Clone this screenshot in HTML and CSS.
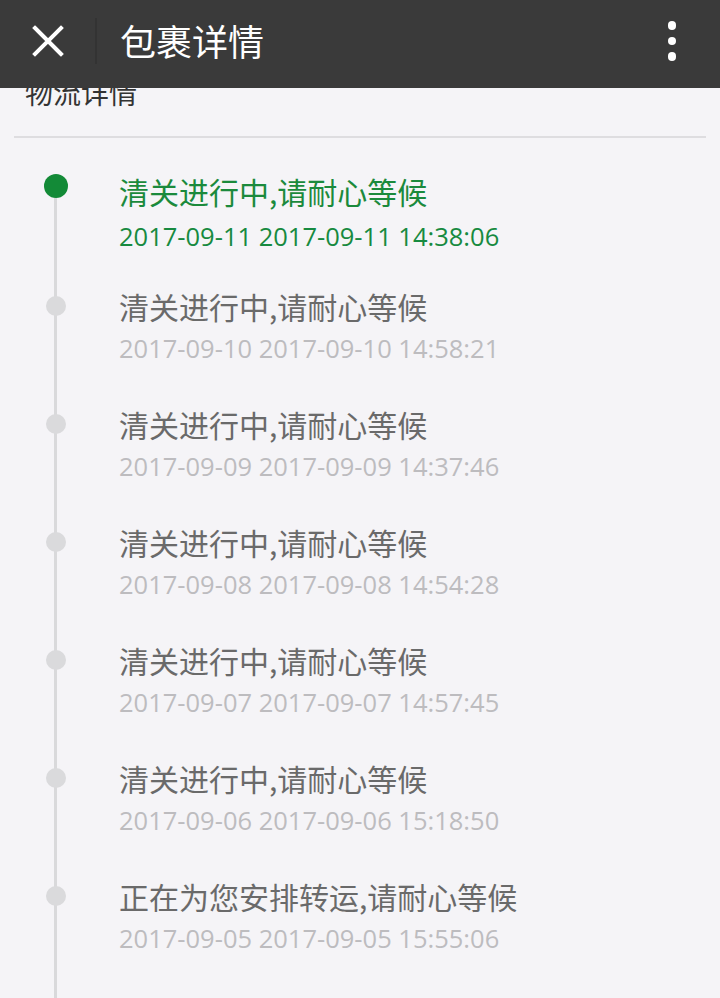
FILE: index.html
```html
<!DOCTYPE html>
<html lang="zh-CN">
<head>
<meta charset="utf-8">
<title>包裹详情</title>
<link rel="stylesheet" href="styles.css">
</head>
<body>
<header class="appbar">
  <button class="appbar-close" aria-label="关闭">
    <svg viewBox="0 0 32 32" width="32" height="32"><path d="M3 3 L29 29 M29 3 L3 29" stroke="#fff" stroke-width="4" stroke-linecap="square" fill="none"/></svg>
  </button>
  <span class="appbar-sep"></span>
  <h1 class="appbar-title">包裹详情</h1>
  <button class="appbar-more" aria-label="更多">
    <span></span><span></span><span></span>
  </button>
</header>

<main class="page">
  <h2 class="section-title">物流详情</h2>
  <ol class="timeline">
    <li class="event is-current">
      <span class="event-dot"></span>
      <div class="event-body">
        <p class="event-text">清关进行中,请耐心等候</p>
        <p class="event-time">2017-09-11 2017-09-11 14:38:06</p>
      </div>
    </li>
    <li class="event">
      <span class="event-dot"></span>
      <div class="event-body">
        <p class="event-text">清关进行中,请耐心等候</p>
        <p class="event-time">2017-09-10 2017-09-10 14:58:21</p>
      </div>
    </li>
    <li class="event">
      <span class="event-dot"></span>
      <div class="event-body">
        <p class="event-text">清关进行中,请耐心等候</p>
        <p class="event-time">2017-09-09 2017-09-09 14:37:46</p>
      </div>
    </li>
    <li class="event">
      <span class="event-dot"></span>
      <div class="event-body">
        <p class="event-text">清关进行中,请耐心等候</p>
        <p class="event-time">2017-09-08 2017-09-08 14:54:28</p>
      </div>
    </li>
    <li class="event">
      <span class="event-dot"></span>
      <div class="event-body">
        <p class="event-text">清关进行中,请耐心等候</p>
        <p class="event-time">2017-09-07 2017-09-07 14:57:45</p>
      </div>
    </li>
    <li class="event">
      <span class="event-dot"></span>
      <div class="event-body">
        <p class="event-text">清关进行中,请耐心等候</p>
        <p class="event-time">2017-09-06 2017-09-06 15:18:50</p>
      </div>
    </li>
    <li class="event">
      <span class="event-dot"></span>
      <div class="event-body">
        <p class="event-text">正在为您安排转运,请耐心等候</p>
        <p class="event-time">2017-09-05 2017-09-05 15:55:06</p>
      </div>
    </li>
  </ol>
</main>
</body>
</html>
```

FILE: styles.css
```css
* {
  box-sizing: border-box;
}

html, body {
  margin: 0;
  padding: 0;
}

body {
  width: 720px;
  height: 998px;
  overflow: hidden;
  background: #f5f4f7;
  font-family: "Noto Sans CJK SC", "Noto Sans", sans-serif;
}

/* top app bar, pinned over the scrolled content */
.appbar {
  position: fixed;
  top: 0;
  left: 0;
  right: 0;
  height: 88px;
  background: #3a3a3a;
  display: flex;
  align-items: center;
  z-index: 10;
}

.appbar button {
  background: none;
  border: 0;
  padding: 0;
  cursor: pointer;
}

.appbar-close {
  width: 32px;
  height: 32px;
  margin-left: 32px;
  margin-top: -6px;
  display: flex;
}

.appbar-sep {
  width: 2px;
  height: 46px;
  background: #333333;
  margin-left: 31px;
  margin-top: -6px;
}

.appbar-title {
  margin: -8px 0 0 23px;
  font-size: 36px;
  font-weight: 400;
  color: #ffffff;
  line-height: 44px;
  flex: 1;
}

.appbar-more {
  width: 10px;
  margin-right: 43px;
  margin-top: -6px;
  display: flex;
  flex-direction: column;
  align-items: center;
  gap: 7px;
}

.appbar-more span {
  width: 8.5px;
  height: 8.5px;
  border-radius: 50%;
  background: #ffffff;
}

/* content */
.page {
  padding: 0;
}

.section-title {
  margin: 72px 14px 0;
  padding: 0 0 24px 11px;
  font-size: 28px;
  font-weight: 400;
  line-height: 40px;
  color: #333333;
  border-bottom: 2px solid #dedde0;
}

.timeline {
  list-style: none;
  margin: 0;
  padding: 31px 0 0;
  position: relative;
}

/* rail behind the dots */
.timeline::before {
  content: "";
  position: absolute;
  left: 54px;
  top: 48px;
  bottom: -10px;
  width: 3px;
  background: #d9d9db;
}

.event {
  display: grid;
  grid-template-columns: 119px 1fr;
  padding-bottom: 34px;
  position: relative;
}

.event-dot {
  width: 20px;
  height: 20px;
  border-radius: 50%;
  background: #dadadc;
  margin: 12px 0 0 46px;
  position: relative;
  z-index: 1;
}

.event-body p {
  margin: 0;
}

.event-text {
  font-size: 30px;
  line-height: 44px;
  color: #6a6a6a;
  white-space: nowrap;
}

.event-time {
  font-family: "Open Sans", "Noto Sans CJK SC", sans-serif;
  font-size: 25.5px;
  line-height: 40px;
  color: #bdbcbf;
  white-space: nowrap;
}

.event.is-current {
  padding-bottom: 28px;
}

.event.is-current .event-dot {
  width: 24px;
  height: 24px;
  margin: 5px 0 0 44px;
  background: #138a37;
}

.event.is-current .event-text {
  color: #1b8a3c;
}

.event.is-current .event-time {
  margin-top: 3px;
  color: #178a40;
}
```
